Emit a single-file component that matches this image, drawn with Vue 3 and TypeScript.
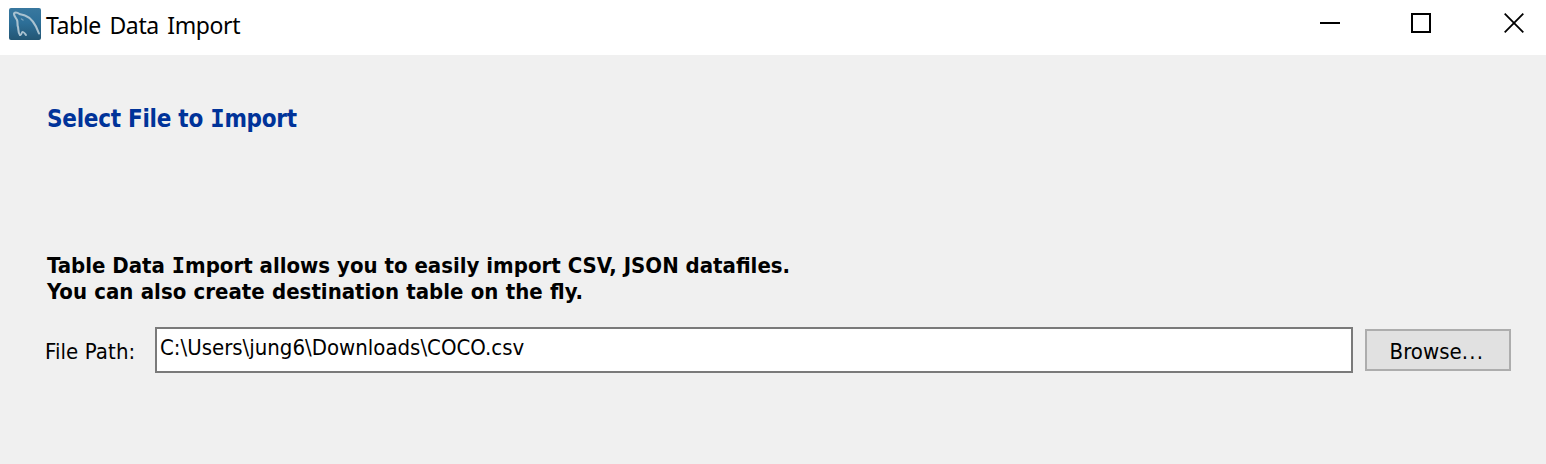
<script setup lang="ts">
import { ref } from 'vue'

const filePath = ref<string>('C:\\Users\\jung6\\Downloads\\COCO.csv')
</script>

<template>
  <main class="window">
    <header class="titlebar">
      <svg class="logo" width="32" height="32" viewBox="0 0 32 32">
        <defs>
          <linearGradient id="tile" x1="0" y1="0" x2="0" y2="1">
            <stop offset="0" stop-color="#39789f" />
            <stop offset="0.45" stop-color="#2d6f98" />
            <stop offset="1" stop-color="#235674" />
          </linearGradient>
        </defs>
        <rect width="32" height="32" rx="2" fill="url(#tile)" />
        <g fill="none" stroke="#a9c2d0" stroke-linecap="round" stroke-linejoin="round">
          <path d="M30 25.5C27 17 23 10 16 7.5C13.500 6.500 12 6.500 10.500 6C8 4 5 4 5 6C5 8 7 10 8 12C9 14 8 17 9 19C9.500 21 9 25 11 27" stroke-width="2.100" />
          <path d="M11 27C13.500 27 12 23.500 14 24C15.500 24.500 16 26 17 27" stroke-width="1.800" />
          <path d="M12.500 11L14 12" stroke-width="1.400" opacity="0.6" />
        </g>
      </svg>
      <span class="title">Table Data Import</span>
      <div class="controls">
        <svg width="20" height="20" viewBox="0 0 20 20"><path d="M0 10H20" /></svg>
        <svg width="20" height="20" viewBox="0 0 20 20"><path d="M1 1H19V19H1Z" /></svg>
        <svg class="close" width="20" height="20" viewBox="0 0 20 20"><path d="M.7 .7L19.300 19.300M19.300 .7L.7 19.300" /></svg>
      </div>
    </header>
    <h1 class="heading">Select File to <span class="cap-i">I</span>mport</h1>
    <div class="description">
      <p class="first">Table Data <span class="cap-i">I</span>mport allows you to easily import CSV, JSON datafiles.</p>
      <p class="second">You can also create destination table on the fly.</p>
    </div>
    <div class="file-row">
      <label class="label" for="path">File Path:</label>
      <input id="path" v-model="filePath" class="path" type="text" spellcheck="false" />
      <button class="browse" type="button">Browse<span class="dots">...</span></button>
    </div>
  </main>
</template>

<style>
body {
  margin: 0;
}
</style>

<style scoped>
.window {
  box-sizing: border-box;
  width: 1546px;
  height: 464px;
  overflow: hidden;
  background: #f0f0f0;
  color: #000;
  font-family: "DejaVu Sans Condensed", "DejaVu Sans", sans-serif;
  font-stretch: condensed;
  font-size: 22px;
}
.titlebar {
  display: flex;
  box-sizing: border-box;
  height: 55px;
  padding: 8px 22px 0 9px;
  background: #fff;
}
.title {
  margin: 0 0 0 5px;
  font: 23px/34px "Noto Sans", sans-serif;
  letter-spacing: -0.4px;
  word-spacing: 3px;
  white-space: pre;
}
.controls {
  display: flex;
  gap: 71px;
  margin: 5px 0 0 auto;
}
.controls svg {
  fill: none;
  stroke: #000;
  stroke-width: 2;
}
.controls .close {
  margin-left: 2px;
  stroke-width: 1.8;
}
.heading {
  margin: 48px 0 0 47px;
  color: #003399;
  font-size: 24px;
  line-height: 32px;
  font-weight: 700;
  letter-spacing: -0.27px;
  white-space: nowrap;
}
.cap-i {
  font-family: "DejaVu Sans Mono", monospace;
}
.description {
  margin: 118px 0 0 47px;
  font-weight: 700;
  line-height: 26px;
  white-space: nowrap;
}
.description p {
  margin: 0;
}
.description .second {
  word-spacing: 0.4px;
}
.file-row {
  display: flex;
  margin: 22px 0 0 45px;
}
.label {
  width: 110px;
  margin-top: 11px;
  line-height: 28px;
  letter-spacing: 0.1px;
  white-space: nowrap;
}
.path {
  box-sizing: border-box;
  width: 1198px;
  height: 46px;
  padding: 0 4px 5px 3px;
  border: 2px solid #7a7a7a;
  border-radius: 0;
  outline: none;
  background: #fff;
  color: #000;
  font: inherit;
}
.browse {
  box-sizing: border-box;
  width: 146px;
  height: 42px;
  margin: 2px 0 0 12px;
  padding: 2px 2px 0 0;
  border: 2px solid #adadad;
  border-radius: 0;
  background: #e1e1e1;
  color: #000;
  font: inherit;
}
.dots {
  letter-spacing: 1.3px;
}
</style>
